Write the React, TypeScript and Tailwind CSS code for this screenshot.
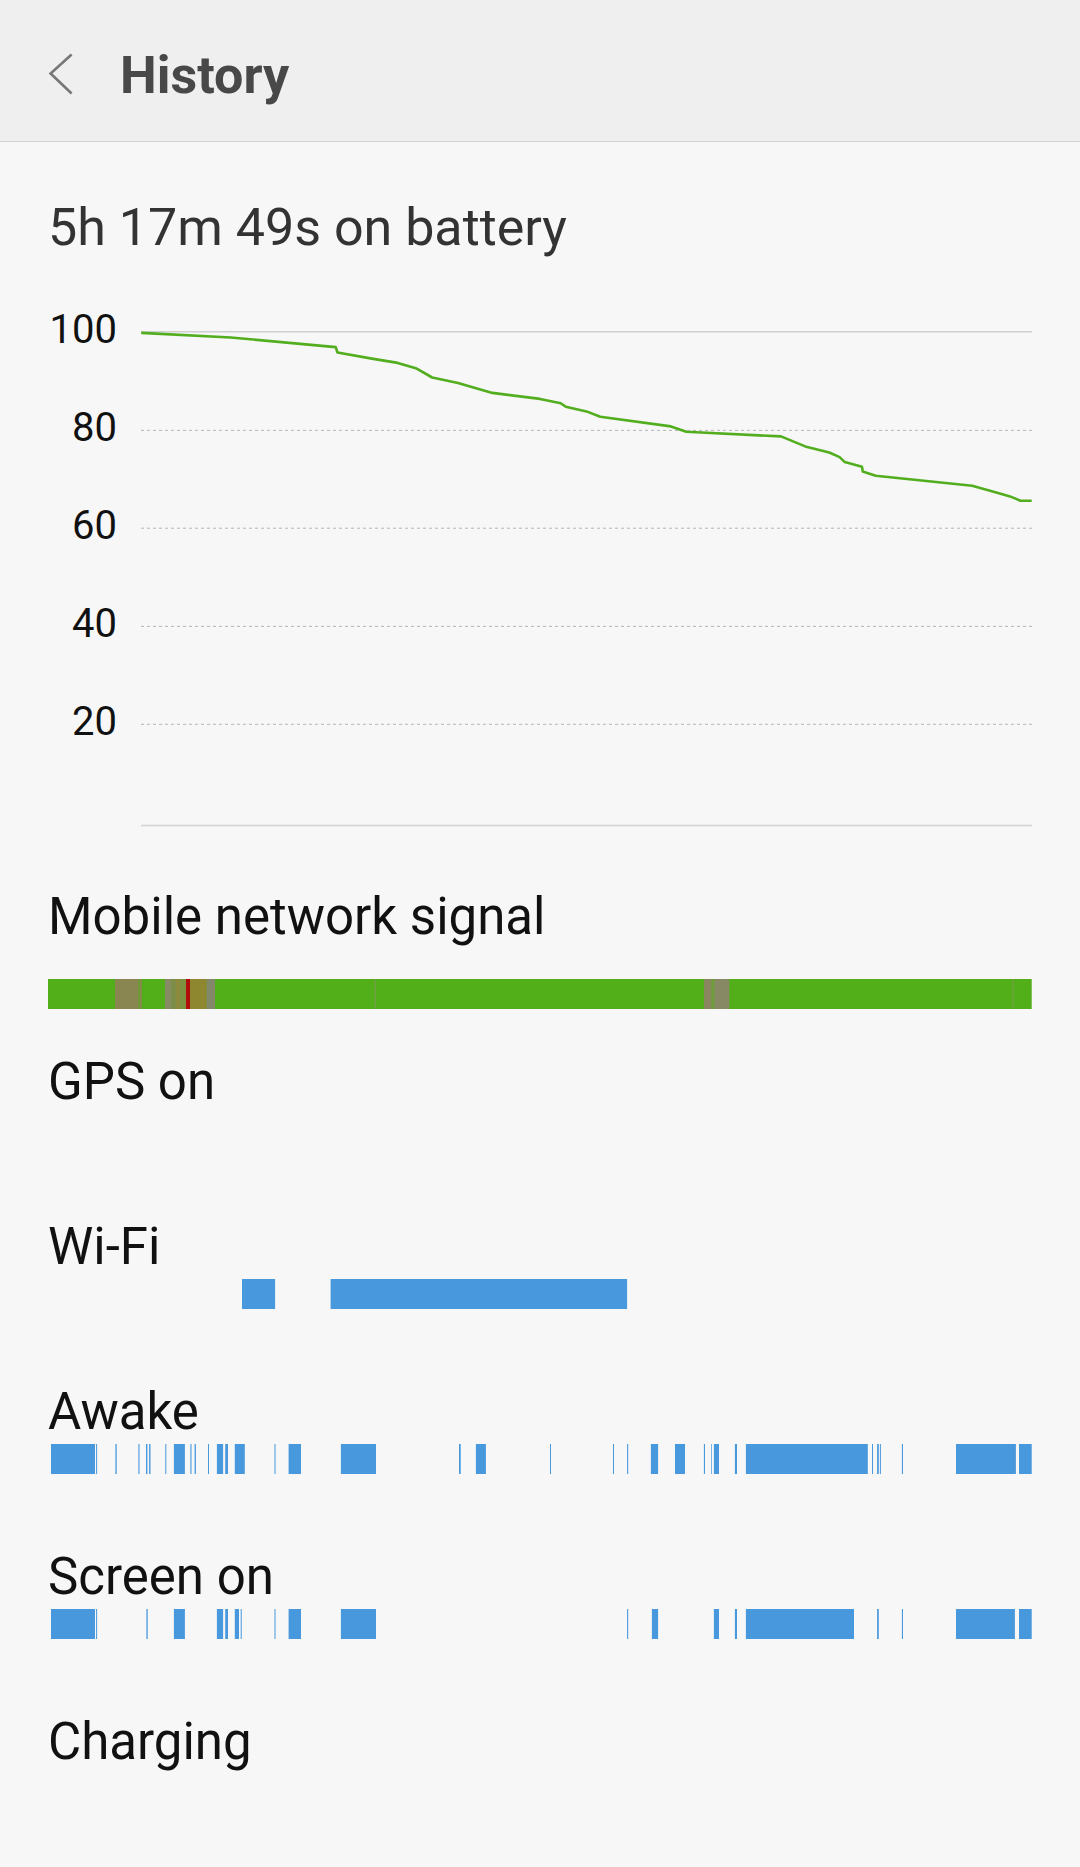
import React from 'react';

type Seg = [number, number];
type ColorSeg = [number, number, string];

const BLUE = '#4798dc';
const LINE_GREEN = '#52ae1e';
const BAR_GREEN = '#52ae19';

// battery level curve, page coordinates (x, y)
const batteryCurve: [number, number][] = [
  [141.2, 332.9], [230.7, 337.5], [335.7, 347.1], [337.5, 352.5], [371.9, 358.6],
  [397.7, 362.9], [416.7, 368.6], [432.2, 377.5], [458, 382.9], [492.4, 392.9],
  [540, 398.9], [560.7, 403.2], [565.8, 406.8], [586.5, 411.4], [600.3, 416.8],
  [670.9, 426.4], [686.3, 431.8], [781, 436.4], [805.2, 446.4], [829.3, 452.5],
  [839.6, 457.1], [844.8, 462.1], [862, 466.8], [862.7, 471.4], [875.7, 475.7],
  [972.2, 485.7], [998, 492.9], [1010, 496.4], [1020.4, 500.7], [1031.7, 500.7],
];

const mobileSignal: ColorSeg[] = [
  [115, 138, '#8a8652'],
  [138, 139.7, '#6e9a38'],
  [139.7, 141.7, '#8a8652'],
  [165, 171.7, '#888a66'],
  [171.7, 176, '#7f8c48'],
  [176, 180, '#8c8a3c'],
  [180, 186, '#7c9241'],
  [186, 190, '#b10d0d'],
  [190, 206.7, '#8e8730'],
  [206.7, 215, '#84886a'],
  [374.7, 375.7, '#7d9a55'],
  [704, 711.7, '#8a8760'],
  [711.7, 714.3, '#6f9d3c'],
  [714.3, 729.3, '#878864'],
  [1012.5, 1013.5, '#7a9a52'],
];

const wifi: Seg[] = [
  [242, 275.1],
  [330.6, 627.1],
];

const awake: Seg[] = [
  [51, 95], [96.1, 97.1], [115.4, 116.7], [138.4, 139.5], [146, 147.4], [149.1, 150.5],
  [165.3, 166.3], [173.9, 184.9], [190.4, 191.5], [194.6, 195.9], [208, 209], [216.9, 223.1],
  [225.2, 228], [234.8, 244.8], [274.5, 275.5], [288.6, 301], [340.9, 376], [459, 460.7],
  [475.9, 485.9], [550, 551], [613, 614], [627.1, 628.2], [650.9, 658.1], [675, 685],
  [703.9, 705], [711.1, 711.8], [713.9, 719], [734.9, 737], [745.9, 867.8], [872, 873],
  [877.1, 878.8], [879.9, 880.9], [901.9, 903], [956, 1015.9], [1019, 1031.7],
];

const screenOn: Seg[] = [
  [51, 95], [96.1, 97.1], [146.4, 147.7], [173.9, 184.9], [216.9, 223.1], [225.2, 228],
  [234.8, 239], [240.7, 241.7], [274.5, 275.5], [288.6, 301], [340.9, 376], [627.1, 628.2],
  [651.9, 658.1], [713.9, 719], [734.9, 737], [745.9, 854], [877.1, 878.8], [901.9, 903],
  [956, 1014.9], [1019, 1031.7],
];

const CONTENT_LEFT = 48;
const CHART_LEFT = 141;
const CHART_TOP = 281;

const TimelineBar: React.FC<{ segments?: Seg[]; colored?: ColorSeg[]; base?: boolean }> = ({
  segments = [],
  colored = [],
  base = false,
}) => (
  <svg width="984" height="30" className="block">
    {base && <rect x={47.5 - CONTENT_LEFT} y="0" width={1031.7 - 47.5} height="30" fill={BAR_GREEN} />}
    {colored.map(([a, b, c], i) => (
      <rect key={i} x={a - CONTENT_LEFT} y="0" width={b - a} height="30" fill={c} />
    ))}
    {segments.map(([a, b], i) => (
      <rect key={i} x={a - CONTENT_LEFT} y="0" width={b - a} height="30" fill={BLUE} />
    ))}
  </svg>
);

const Section: React.FC<{ label: string; barGap?: string; children?: React.ReactNode }> = ({
  label,
  barGap = 'mt-[7px]',
  children,
}) => (
  <div className="h-[165px]">
    <div className="text-[51px] leading-none text-[#111]">{label}</div>
    {children && <div className={barGap}>{children}</div>}
  </div>
);

const BatteryChart: React.FC = () => {
  const gridDashed = [430.4, 528.2, 626.4, 724.3];
  const points = batteryCurve.map(([x, y]) => `${x - CHART_LEFT},${y - CHART_TOP}`).join(' ');

  return (
    <div className="flex mt-[27px]">
      <div className="w-[69px] flex flex-col text-[40px] leading-none text-[#111]">
        {['100', '80', '60', '40', '20'].map((v) => (
          <div key={v} className="h-[98.1px] flex items-center justify-end">
            {v}
          </div>
        ))}
      </div>
      <svg width="891" height="550" className="ml-[24px] block">
        <line x1="0" x2="891" y1={331.8 - CHART_TOP} y2={331.8 - CHART_TOP} stroke="#cfcfcf" strokeWidth="1.5" />
        {gridDashed.map((y) => (
          <line
            key={y}
            x1="0"
            x2="891"
            y1={y - CHART_TOP}
            y2={y - CHART_TOP}
            stroke="#b4b4b4"
            strokeWidth="1"
            strokeDasharray="3 3"
          />
        ))}
        <line x1="0" x2="891" y1={825.4 - CHART_TOP} y2={825.4 - CHART_TOP} stroke="#d2d2d2" strokeWidth="1.5" />
        <polyline points={points} fill="none" stroke={LINE_GREEN} strokeWidth="2.6" strokeLinejoin="round" />
      </svg>
    </div>
  );
};

export default function App() {
  return (
    <div className="w-[1080px] min-h-[1867px] bg-[#f7f7f7]" style={{ fontFamily: 'Roboto, "Noto Sans", sans-serif' }}>
      <header className="h-[142px] flex items-start pt-[50px] bg-[#eeefee] border-b border-[#d2d2d2]">
        <svg width="26" height="44" viewBox="0 0 26 44" className="ml-[48px] mt-[2px]">
          <polyline points="23.6,2.5 2.6,21.5 23.6,41.5" fill="none" stroke="#777" strokeWidth="2.6" />
        </svg>
        <h1 className="ml-[46px] text-[52px] leading-none font-bold text-[#484848]">History</h1>
      </header>

      <main className="px-[48px]">
        <div className="mt-[60px] text-[52px] leading-none text-[#333]">5h 17m 49s on battery</div>

        <BatteryChart />

        <div className="mt-[60px]">
          <Section label="Mobile network signal" barGap="mt-[37px]">
            <TimelineBar base colored={mobileSignal} />
          </Section>
          <Section label="GPS on" />
          <Section label="Wi-Fi">
            <TimelineBar segments={wifi} />
          </Section>
          <Section label="Awake">
            <TimelineBar segments={awake} />
          </Section>
          <Section label="Screen on">
            <TimelineBar segments={screenOn} />
          </Section>
          <Section label="Charging" />
        </div>
      </main>
    </div>
  );
}
